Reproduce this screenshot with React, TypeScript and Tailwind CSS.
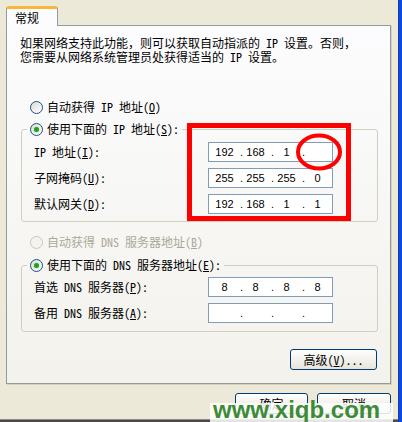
import React from 'react';

const cjk = "font-['Noto_Sans_Mono_CJK_SC','Noto_Sans_CJK_SC',sans-serif]";
const num = "font-['Liberation_Sans',Arial,sans-serif]";

const Radio: React.FC<{ checked?: boolean; disabled?: boolean }> = ({ checked, disabled }) => (
  <span
    className={`flex h-[13px] w-[13px] shrink-0 items-center justify-center rounded-full border bg-linear-to-br ${
      disabled ? 'border-[#CAC8BB] from-[#F4F3EE] to-[#F4F3EE]' : 'border-[#1C5180] from-[#DCDBD5] to-white'
    }`}
  >
    {checked && <span className="h-[5px] w-[5px] rounded-full bg-[#21A121] shadow-[0_0_1px_#6FD56F]" />}
  </span>
);

const IpBox: React.FC<{ parts: string[] }> = ({ parts }) => (
  <div className={`flex h-[20px] w-[125px] shrink-0 items-center border border-[#7F9DB9] bg-white pl-[3px] text-[11px] leading-[14px] text-black ${num}`}>
    {parts.map((p, i) => (
      <React.Fragment key={i}>
        {i > 0 && <span className="w-[6px] text-right">.</span>}
        <span className="w-[25px] text-center">{p}</span>
      </React.Fragment>
    ))}
  </div>
);

const Row: React.FC<{ label: React.ReactNode; parts: string[] }> = ({ label, parts }) => (
  <div className="flex items-center">
    <span className="w-[174px]">{label}</span>
    <IpBox parts={parts} />
  </div>
);

const XpButton: React.FC<{ children: React.ReactNode; className?: string }> = ({ children, className }) => (
  <button
    className={`flex h-[21px] items-center justify-center rounded-[3px] border border-[#003C74] bg-linear-to-b from-white to-[#E6E4DA] text-[12px] leading-[14px] text-black ${className ?? ''}`}
  >
    {children}
  </button>
);

export default function App() {
  return (
    <div className={`relative flex h-[422px] w-[402px] overflow-hidden bg-[#ECE9D8] text-[12px] leading-[14px] text-black ${cjk}`}>
      <div className="flex w-[398px] flex-col">
        {/* tab header */}
        <div className="relative z-10 -mb-px ml-[6px] mt-[6px] h-[20px] w-[52px] rounded-t-[3px] border-x border-t-[3px] border-x-[#919B9C] border-t-[#F7B83A] bg-[#FCFCFE] pl-[8px] pt-[2px]">
          常规
        </div>

        {/* tab panel */}
        <div className="ml-[6px] flex h-[359px] w-[385px] flex-col border border-[#919B9C] bg-linear-to-b from-[#FCFCFE] to-[#F3F2EC] shadow-[1px_1px_0_#D4D1C2]">
          <p className="ml-[13px] mt-[10px]">
            如果网络支持此功能，则可以获取自动指派的 IP 设置。否则，
            <br />
            您需要从网络系统管理员处获得适当的 IP 设置。
          </p>

          <div className="ml-[23px] mt-[36px] flex h-[14px] items-center gap-[4px]">
            <Radio />
            <span>
              自动获得 IP 地址(<u>O</u>)
            </span>
          </div>

          <fieldset className="ml-[14px] mt-[8px] w-[357px] rounded-[3px] border border-[#D0D0BF]">
            <legend className="ml-[5px] px-[3px]">
              <span className="flex h-[14px] items-center gap-[4px]">
                <Radio checked />
                <span>
                  使用下面的 IP 地址(<u>S</u>):
                </span>
              </span>
            </legend>
            <div className="flex flex-col gap-[6px] px-[12px] pb-[7px] pt-[6px]">
              <Row label={<>IP 地址(<u>I</u>):</>} parts={['192', '168', '1', '']} />
              <Row label={<>子网掩码(<u>U</u>):</>} parts={['255', '255', '255', '0']} />
              <Row label={<>默认网关(<u>D</u>):</>} parts={['192', '168', '1', '1']} />
            </div>
          </fieldset>

          <div className="ml-[23px] mt-[13px] flex h-[14px] items-center gap-[4px] text-[#ACA899]">
            <Radio disabled />
            <span>
              自动获得 DNS 服务器地址(<u>B</u>)
            </span>
          </div>

          <fieldset className="ml-[14px] mt-[9px] w-[357px] rounded-[3px] border border-[#D0D0BF]">
            <legend className="ml-[5px] px-[3px]">
              <span className="flex h-[14px] items-center gap-[4px]">
                <Radio checked />
                <span>
                  使用下面的 DNS 服务器地址(<u>E</u>):
                </span>
              </span>
            </legend>
            <div className="flex flex-col gap-[6px] px-[12px] pb-[8px] pt-[5px]">
              <Row label={<>首选 DNS 服务器(<u>P</u>):</>} parts={['8', '8', '8', '8']} />
              <Row label={<>备用 DNS 服务器(<u>A</u>):</>} parts={['', '', '', '']} />
            </div>
          </fieldset>

          <XpButton className="mr-[13px] mt-[17px] w-[87px] self-end">
            高级(<u>V</u>)...
          </XpButton>
        </div>

        {/* dialog buttons */}
        <div className="mt-[9px] flex justify-end gap-[9px] pr-[7px]">
          <XpButton className="w-[73px]">确定</XpButton>
          <XpButton className="w-[74px]">取消</XpButton>
        </div>

        <div className="mt-auto h-[3px] border-t border-[#8A8A8A] bg-[#4A4A4A]" />
      </div>

      {/* window frame */}
      <div className="w-[1px] bg-[#1B3A9E]" />
      <div className="w-[3px] bg-[#0A4AE4]" />

      {/* red annotations */}
      <div className="absolute left-[187px] top-[123px] h-[98px] w-[164px] border-[5px] border-[#FF0000]" />
      <svg className="absolute left-[294px] top-[132px]" width="50" height="40" viewBox="0 0 50 40">
        <ellipse cx="25" cy="20" rx="21" ry="16.5" fill="none" stroke="#FF0000" strokeWidth="4" />
      </svg>

      {/* watermark */}
      <div className="absolute left-[210px] top-[403px] h-[19px] w-[183px] bg-white/85" />
      <span className="absolute left-[213px] top-[398px] font-['Liberation_Sans',Arial,sans-serif] text-[24px] font-bold leading-[24px] text-[#3D8B37]">
        www.xiqb.com
      </span>
    </div>
  );
}
